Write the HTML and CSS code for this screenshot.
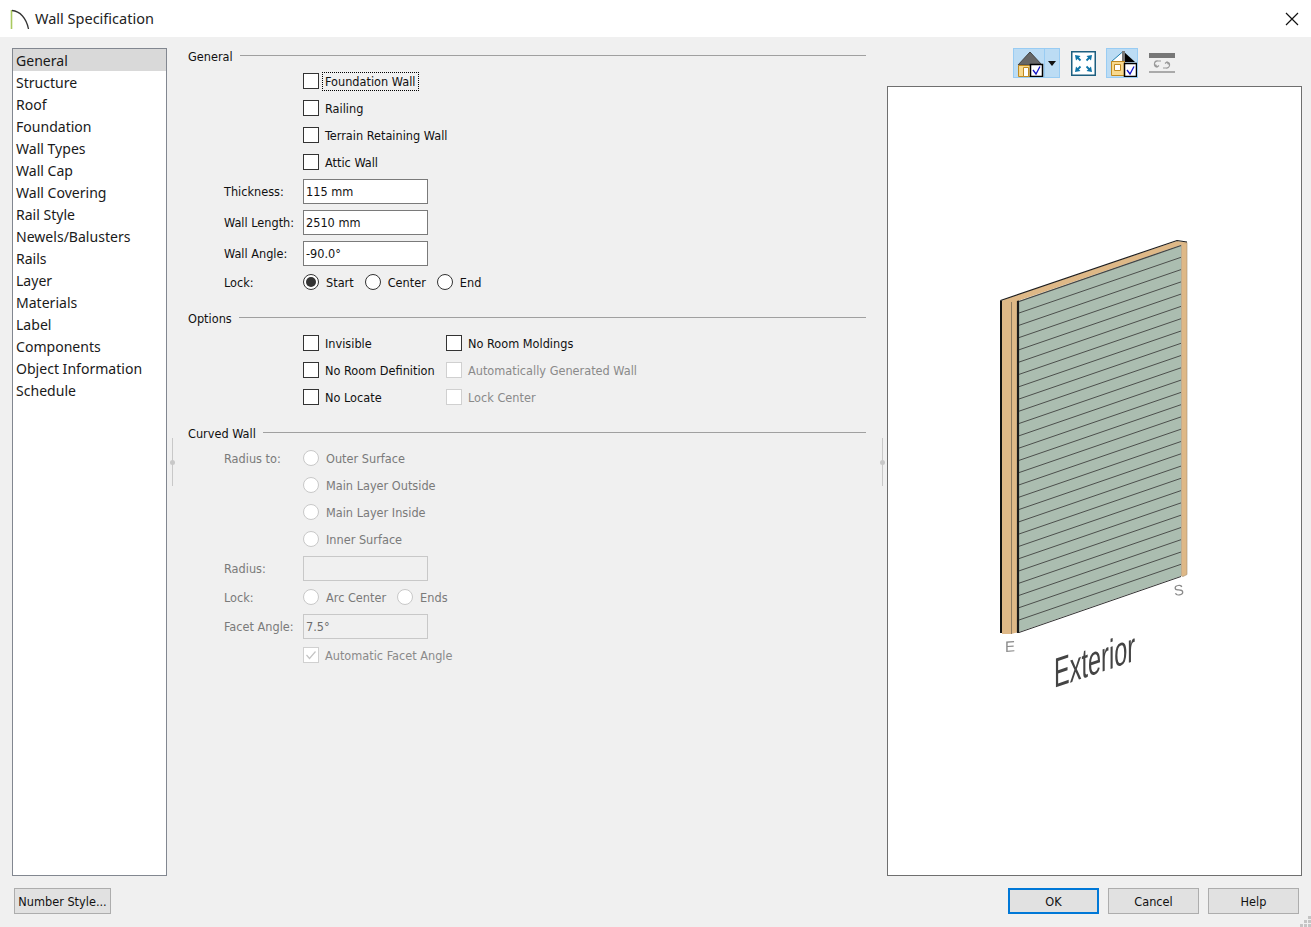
FILE: index.html
```html
<!DOCTYPE html>
<html lang="en">
<head>
<meta charset="utf-8">
<title>Wall Specification</title>
<link rel="stylesheet" href="styles.css">
</head>
<body>
<div class="dialog">
  <header class="titlebar">
    <svg class="app-icon" width="22" height="22" viewBox="0 0 22 22"><path d="M1.500 2v19" stroke="#a9c95f" stroke-width="1.600" fill="none"/><path d="M2 2.500c8 .5 14.500 8 16.500 18.500" stroke="#333" stroke-width="1.300" fill="none"/></svg>
    <span class="title">Wall Specification</span>
    <svg class="close" width="14" height="14" viewBox="0 0 14 14"><path d="M1 1l12 12M13 1L1 13" stroke="#111" stroke-width="1.200" fill="none"/></svg>
  </header>
  <main class="content">
    <ul class="nav">
      <li class="active">General</li>
      <li>Structure</li>
      <li>Roof</li>
      <li>Foundation</li>
      <li>Wall Types</li>
      <li>Wall Cap</li>
      <li>Wall Covering</li>
      <li>Rail Style</li>
      <li>Newels/Balusters</li>
      <li>Rails</li>
      <li>Layer</li>
      <li>Materials</li>
      <li>Label</li>
      <li>Components</li>
      <li>Object Information</li>
      <li>Schedule</li>
    </ul>
    <div class="gutter gutter-left"><span class="handle"></span></div>
    <div class="form">
      <section class="group">
        <h2 class="heading"><span>General</span></h2>
        <div class="row"><span class="label"></span><span class="check"><i class="box"></i><span class="focus">Foundation Wall</span></span></div>
        <div class="row"><span class="label"></span><span class="check"><i class="box"></i><span class="pad">Railing</span></span></div>
        <div class="row"><span class="label"></span><span class="check"><i class="box"></i><span class="pad">Terrain Retaining Wall</span></span></div>
        <div class="row"><span class="label"></span><span class="check"><i class="box"></i><span class="pad">Attic Wall</span></span></div>
        <div class="row tall"><span class="label">Thickness:</span><span class="input">115 mm</span></div>
        <div class="row tall"><span class="label">Wall Length:</span><span class="input">2510 mm</span></div>
        <div class="row tall"><span class="label">Wall Angle:</span><span class="input">-90.0°</span></div>
        <div class="row"><span class="label">Lock:</span>
          <span class="radios">
            <span class="radio-item"><i class="radio on"></i>Start</span>
            <span class="radio-item"><i class="radio"></i>Center</span>
            <span class="radio-item"><i class="radio"></i>End</span>
          </span>
        </div>
      </section>
      <section class="group">
        <h2 class="heading"><span>Options</span></h2>
        <div class="row"><span class="label"></span><span class="check col"><i class="box"></i><span class="pad">Invisible</span></span><span class="check"><i class="box"></i><span class="pad">No Room Moldings</span></span></div>
        <div class="row"><span class="label"></span><span class="check col"><i class="box"></i><span class="pad">No Room Definition</span></span><span class="check off"><i class="box"></i><span class="pad">Automatically Generated Wall</span></span></div>
        <div class="row"><span class="label"></span><span class="check col"><i class="box"></i><span class="pad">No Locate</span></span><span class="check off"><i class="box"></i><span class="pad">Lock Center</span></span></div>
      </section>
      <section class="group disabled">
        <h2 class="heading"><span>Curved Wall</span></h2>
        <div class="row"><span class="label">Radius to:</span><span class="radio-item"><i class="radio"></i>Outer Surface</span></div>
        <div class="row"><span class="label"></span><span class="radio-item"><i class="radio"></i>Main Layer Outside</span></div>
        <div class="row"><span class="label"></span><span class="radio-item"><i class="radio"></i>Main Layer Inside</span></div>
        <div class="row"><span class="label"></span><span class="radio-item"><i class="radio"></i>Inner Surface</span></div>
        <div class="row tall"><span class="label">Radius:</span><span class="input"></span></div>
        <div class="row"><span class="label">Lock:</span>
          <span class="radios">
            <span class="radio-item"><i class="radio"></i>Arc Center</span>
            <span class="radio-item"><i class="radio"></i>Ends</span>
          </span>
        </div>
        <div class="row tall"><span class="label">Facet Angle:</span><span class="input">7.5°</span></div>
        <div class="row"><span class="label"></span><span class="check off"><i class="box"><svg width="14" height="14" viewBox="0 0 14 14"><path d="M2.500 7l3 3.500 6-7" stroke="#c4c4c4" stroke-width="1.200" fill="none"/></svg></i><span class="pad">Automatic Facet Angle</span></span></div>
      </section>
    </div>
    <div class="gutter gutter-right"><span class="handle"></span></div>
    <div class="side">
      <div class="toolbar">
        <div class="tool-split">
          <span class="tool-main">
            <svg width="28" height="28" viewBox="0 0 28 28">
              <path d="M2 16L14 3l12 13z" fill="#666" stroke="#444"/>
              <path d="M2.500 16.500h12v11h-12z" fill="#f8d98e" stroke="#c08a20"/>
              <path d="M7.500 18.500h5v9h-5z" fill="#fff" stroke="#c08a20"/>
              <path d="M14.500 15.500h12v12h-12z" fill="#fff" stroke="#000" stroke-width="1.500"/>
              <path d="M17 21l3 4 4-7.500" fill="none" stroke="#1414c8" stroke-width="1.300"/>
            </svg>
          </span>
          <span class="tool-arrow"><i></i></span>
        </div>
        <span class="tool-plain first">
          <svg width="25" height="25" viewBox="0 0 25 25">
            <path d="M.75.75h23.500v23.500H.75z" fill="#fff" stroke="#1d5f80" stroke-width="1.500"/>
            <path d="M4 4l5.500 1L5 9.500zM21 4l-1 5.500L15.500 5zM4 21l1-5.500L9.500 20zM21 21l-5.500-1 4.500-4.500z" fill="#0f75a8"/>
            <path d="M6 6l3.500 3.500M19 6l-3.500 3.500M6 19l3.500-3.500M19 19l-3.500-3.500" stroke="#0f75a8" stroke-width="1.800"/>
          </svg>
        </span>
        <span class="tool-on">
          <svg width="30" height="28" viewBox="0 0 30 28">
            <path d="M4.500 12.500L16 2.500v10z" fill="#fff" stroke="#1f7fb0"/>
            <path d="M16 2l12 11H16z" fill="#000"/>
            <path d="M15 2h3v11h-3z" fill="#777"/>
            <path d="M4.500 12.500h13v14h-13z" fill="#f8d98e" stroke="#c08a20"/>
            <path d="M7.500 15.500h6v6h-6z" fill="#fff" stroke="#c08a20"/>
            <path d="M17.500 14.500h12v13h-12z" fill="#fff" stroke="#000" stroke-width="1.500"/>
            <path d="M20 21l3 4 4-7.500" fill="none" stroke="#1414c8" stroke-width="1.300"/>
          </svg>
        </span>
        <span class="tool-plain last">
          <svg width="26" height="21" viewBox="0 0 26 21">
            <path d="M0 0h26v5H0z" fill="#777"/>
            <path d="M0 19h26" stroke="#aaa" stroke-width="2"/>
            <path d="M12 8H9a3 3 0 0 0-1 6M6.500 11.500l1.500 2.500 2-1.500M14 15h3a3 3 0 0 0 1-6M19.500 11.500L18 9l-2 1.500" stroke="#999" stroke-width="1.200" fill="none"/>
          </svg>
        </span>
      </div>
      <div class="preview">
        <svg class="wall" width="413" height="788" viewBox="888 87 413 788">
          <path d="M1019 300.700 1181 245v331l-162 56z" fill="#abbdb0"/>
          <path d="M1019 313l162-55.700M1019 325.300l162-55.700M1019 337.600l162-55.700M1019 349.800l162-55.700M1019 362.100l162-55.700M1019 374.400l162-55.700M1019 386.700l162-55.700M1019 399l162-55.700M1019 411.200l162-55.700M1019 423.500l162-55.700M1019 435.800l162-55.700M1019 448.100l162-55.700M1019 460.400l162-55.700M1019 472.600l162-55.700M1019 484.900l162-55.700M1019 497.200l162-55.700M1019 509.500l162-55.700M1019 521.800l162-55.700M1019 534l162-55.700M1019 546.300l162-55.700M1019 558.600l162-55.700M1019 570.900l162-55.700M1019 583.200l162-55.700M1019 595.400l162-55.700M1019 607.700l162-55.700M1019 620l162-55.700" stroke="#4c4f4c" stroke-width="1" fill="none"/>
          <path d="M1019 632.500 1181 576.500" stroke="#333" stroke-width="1"/>
          <path d="M1000 300.500h2.500V633H1000z" fill="#111"/>
          <path d="M1002 301h15v331.500l-6 1.500h-9z" fill="#deb887"/>
          <path d="M1011.500 302v332" stroke="#8d7a5e" stroke-width="1"/>
          <path d="M1018 300v333" stroke="#1a1a1a" stroke-width="2.200"/>
          <path d="M1181.500 243.500l5.500-1v332l-4 2-1.500-.5z" fill="#deb887" stroke="#a58f6e" stroke-width=".6"/>
          <path d="M1001 300.500l176-59.500 10 1.500-6 2.500-162 55.500-7 1.500z" fill="#deb887"/>
          <path d="M1000.500 300.500l176.500-60 10 1.500" stroke="#1e1e1e" stroke-width="1.200" fill="none"/>
          <path d="M1019 301.500l162-56" stroke="#444" stroke-width="1.300" fill="none"/>
          <text class="tag" transform="translate(1005 652) skewY(-4)">E</text>
          <text class="tag" transform="translate(1174.500 596) rotate(-8)">S</text>
          <text class="exterior" transform="matrix(.62 -.21 0 1.100 1054 688)">Exterior</text>
        </svg>
      </div>
    </div>
  </main>
  <footer class="footer">
    <button class="btn number">Number Style...</button>
    <div class="actions">
      <button class="btn default">OK</button>
      <button class="btn">Cancel</button>
      <button class="btn">Help</button>
    </div>
    <svg class="grip" width="11" height="11" viewBox="0 0 11 11"><path d="M8 0h3v3H8zM4 4h3v3H4zM8 4h3v3H8zM0 8h3v3H0zM4 8h3v3H4zM8 8h3v3H8z" fill="#c4c4c4"/></svg>
  </footer>
</div>
</body>
</html>
```
FILE: styles.css
```css
* { box-sizing: border-box; }
html, body { margin: 0; padding: 0; }
body {
  width: 1311px;
  height: 927px;
  overflow: hidden;
  background: #f0f0f0;
  color: #111;
  font-family: "DejaVu Sans", "Noto Sans", sans-serif;
  font-stretch: condensed;
  font-size: 12.600px;
}
.dialog { position: relative; display: flex; flex-direction: column; height: 927px; }

.titlebar {
  flex: none;
  height: 37px;
  display: flex;
  align-items: center;
  background: #fff;
  padding: 0 12px 0 10px;
  font-family: "Noto Sans", sans-serif;
  font-stretch: normal;
}
.app-icon { flex: none; margin-right: 3px; margin-top: 1px; }
.title { font-size: 14.500px; color: #222; flex: 1; margin-bottom: 2px; }
.close { flex: none; }

.content {
  flex: none;
  height: 839px;
  display: flex;
  padding: 11px 9px 11px 12px;
}
.nav {
  list-style: none;
  margin: 0;
  padding: 0;
  flex: none;
  width: 155px;
  height: 828px;
  background: #fff;
  border: 1px solid #828790;
  font-family: "Noto Sans", sans-serif;
  font-stretch: normal;
  font-size: 14.050px;
  color: #1a1a1a;
}
.nav li { height: 22px; line-height: 22px; padding: 1px 0 0 3px; white-space: nowrap; }
.nav li.active { background: #d9d9d9; }

.gutter { flex: none; width: 21px; height: 828px; display: flex; align-items: center; }
.gutter-left { padding-left: 5px; }
.gutter-right { padding-left: 16px; }
.handle { position: relative; display: block; width: 1px; height: 48px; background: #c8c8c8; }
.handle::after {
  content: "";
  position: absolute;
  left: -2px;
  top: 22px;
  width: 5px;
  height: 5px;
  border-radius: 50%;
  background: #c8c8c8;
}

.form { flex: none; width: 678px; }
.group { margin-bottom: 14px; }
.heading {
  display: flex;
  align-items: center;
  height: 16px;
  margin: 0 0 4px;
  font-size: 12.600px;
  font-weight: 400;
  color: #111;
}
.heading::after { content: ""; flex: 1; height: 1px; background: #a0a0a0; margin: 0 0 2px 7px; }
.row { display: flex; align-items: center; height: 27px; padding-left: 36px; white-space: nowrap; }
.row.tall { height: 31px; }
.label { flex: none; width: 79px; }
.check { display: inline-flex; align-items: center; }
.col { width: 143px; }
.box {
  flex: none;
  display: flex;
  align-items: center;
  justify-content: center;
  width: 16px;
  height: 16px;
  background: #fff;
  border: 1px solid #333;
  margin: 0 5px 1px 0;
}
.pad { padding: 0 1px; }
.focus { margin-left: -2px; padding: 2px 4px 2px 3px; line-height: 15px; outline: 1px dotted #000; outline-offset: -1px; }
.input {
  flex: none;
  display: block;
  width: 125px;
  height: 25px;
  line-height: 23px;
  padding-left: 2px;
  background: #fff;
  border: 1px solid #7a7a7a;
}
.radios { display: inline-flex; gap: 11px; }
.radio-item { display: inline-flex; align-items: center; }
.radio {
  flex: none;
  display: flex;
  align-items: center;
  justify-content: center;
  width: 16px;
  height: 16px;
  border-radius: 50%;
  background: #fff;
  border: 1px solid #333;
  margin: 0 7px 1px 0;
}
.radio.on::after { content: ""; width: 10px; height: 10px; border-radius: 50%; background: #333; }

.off { color: #8a8a8a; }
.off .box { border-color: #d0d0d0; }
.disabled .label, .disabled .radio-item { color: #7a7a7a; }
.disabled .radio { border-color: #c8c8c8; }
.disabled .input { background: #f0f0f0; border-color: #c8c8c8; color: #6d6d6d; }

.side { flex: none; width: 415px; display: flex; flex-direction: column; }
.toolbar { flex: none; height: 38px; display: flex; align-items: flex-start; padding-left: 126px; }
.tool-split {
  display: flex;
  width: 47px;
  height: 30px;
  background: #bcdcf4;
  border: 1px solid #99ccf3;
}
.tool-main { flex: none; width: 31px; height: 28px; padding-left: 2px; border-right: 1px solid #99ccf3; }
.tool-arrow { flex: 1; display: flex; align-items: center; justify-content: center; }
.tool-arrow i { width: 0; height: 0; border: 4.500px solid transparent; border-top: 5px solid #111; border-bottom: 0; }
.tool-main svg, .tool-on svg, .tool-plain svg { display: block; }
.tool-plain.first { margin: 3px 0 0 11px; }
.tool-on {
  margin-left: 10px;
  width: 32px;
  height: 30px;
  background: #bcdcf4;
  border: 1px solid #99ccf3;
}
.tool-plain.last { margin: 5px 0 0 11px; }
.preview { flex: none; height: 790px; background: #fff; border: 1px solid #6f6f6f; }
.wall { display: block; filter: blur(.35px); }
.tag { font-family: "Liberation Sans", sans-serif; font-stretch: normal; font-size: 15px; fill: #8a8a8a; }
.exterior { font-family: "Liberation Sans", sans-serif; font-stretch: normal; font-size: 38px; fill: #444; }

.footer {
  flex: none;
  height: 51px;
  display: flex;
  justify-content: space-between;
  padding: 12px 12px 13px 14px;
}
.btn {
  font: inherit;
  color: #111;
  width: 91px;
  height: 26px;
  padding: 1px 0 0;
  background: #e1e1e1;
  border: 1px solid #adadad;
}
.btn.number { width: 97px; }
.btn.default { border: 2px solid #0078d7; }
.actions { display: flex; gap: 9px; }
.grip { position: absolute; right: 0; bottom: 0; }
```
